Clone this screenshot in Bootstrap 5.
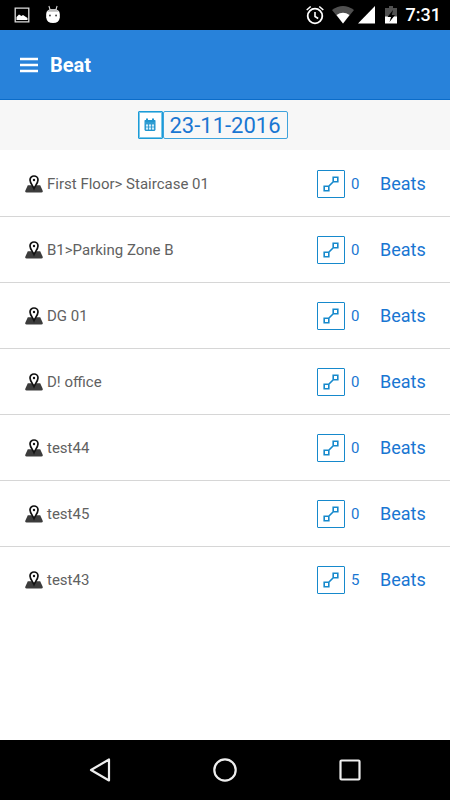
<!DOCTYPE html>
<html lang="en">
<head>
<meta charset="utf-8">
<meta name="viewport" content="width=device-width, initial-scale=1">
<title>Beat</title>
<link href="https://cdn.jsdelivr.net/npm/bootstrap@5.3.0/dist/css/bootstrap.min.css" rel="stylesheet">
<style>
  body { font-family: Roboto, "Liberation Sans", sans-serif; line-height: 24px; }
  svg { display: block; flex: none; }
  .status-bar { height: 30px; padding: 0 9px 0 14px; font-size: 18px; font-weight: 500; }
  .app-bar { height: 70px; background: #2882da; border-bottom: 1px solid #0b6cc9; padding: 0 20px; }
  .app-bar h1 { font-size: 20px; font-weight: 700; line-height: 24px; }
  .date-bar { height: 50px; background: #f7f7f7; padding-right: 25px; }
  .date-btn { width: 25px; height: 28px; border: 1px solid #1b9cd8; border-radius: 1px; outline: 1px solid #7cc6e8; outline-offset: -2px; background: #fff; }
  .date-input { width: 125px; height: 28px; border: 1px solid #3fa3dc; border-radius: 2px; background: #f7f7f7; color: #1976d2; font-size: 22px; text-align: center; }
  .beat-list { padding-top: 1px; }
  .beat-row { height: 66px; padding: 0 25px; border: 0; border-bottom: 1px solid #d6d6d6; color: #616161; font-size: 15px; }
  .beat-row:last-child { border-bottom-color: transparent; }
  .beat-btn { width: 28px; height: 28px; border: 1px solid #1689cc; border-radius: 1px; background: #fff; color: #1689cc; }
  .beat-count { width: 35px; padding-left: 6px; font-size: 15px; color: #1976d2; }
  .beat-link { width: 45px; font-size: 18px; color: #1976d2; white-space: nowrap; }
  .nav-keys { height: 60px; padding: 0 38px; }
  .nav-keys button { width: 124px; height: 60px; }
</style>
</head>
<body class="d-flex flex-column min-vh-100 bg-white">
<svg width="0" height="0" class="position-absolute" aria-hidden="true">
  <symbol id="pin" viewBox="0 0 18 18">
    <path d="M2.800 10.300h12.400l2.400 5.200q.5 2-1.200 2H1.600q-1.700 0-1.200-2z" fill="#3c3c3c"/>
    <path d="M9 13.500C8 11 5 8 5 5a4 4 0 0 1 8 0C13 8 10 11 9 13.500z" fill="#fff" stroke="#111" stroke-width="1.700"/>
    <circle cx="9" cy="5" r="1.200" fill="#111"/>
  </symbol>
  <symbol id="route" viewBox="0 0 16 16">
    <path d="M5.500 10.500l5-5M1.200 10.200h4.600v4.600H1.200zM10.200 1.200h4.600v4.600h-4.600z" fill="none" stroke="currentColor" stroke-width="1.600"/>
  </symbol>
</svg>

<div class="status-bar bg-black text-white d-flex align-items-center">
  <svg width="16" height="16" viewBox="0 0 16 16"><path d="M1.200 1.200h13.600v13.600h-13.600z" fill="none" stroke="#ddd" stroke-width="1.300"/><path d="M2.500 13v-3l2.500-2.500 2.500 1.500 1.500-1 4.500 3v2z" fill="#fff"/></svg>
  <svg class="ms-3" width="14" height="20" viewBox="0 0 16 20" preserveAspectRatio="none"><path d="M3.300 1l1.500 4M12.700 1l-1.500 4" stroke="#ddd" stroke-width="1.200"/><path d="M.2 9Q.5 4 8 4t7.800 5v3.500Q15 18 8 18T.2 12.500z" fill="#fff"/><path d="M1.500 6.800Q3 4 8 4t6.500 2.800z" fill="#bbb"/><circle cx="4.500" cy="10.500" r="1" fill="#333"/><circle cx="11.500" cy="10.500" r="1" fill="#333"/></svg>
  <svg class="ms-auto" width="18" height="20" viewBox="0 0 18 20"><circle cx="9" cy="11" r="7.300" fill="none" stroke="#fff" stroke-width="1.800"/><path d="M9 7v4.500l3.200 2M.7 5l4-3.500M17.300 5l-4-3.500" fill="none" stroke="#fff" stroke-width="1.600"/></svg>
  <svg class="ms-2" width="22" height="18" viewBox="0 0 22 18"><path d="M0 4Q11-4 22 4L11 17.500z" fill="#505050"/><path d="M4.500 9Q11 4.500 17.500 9L11 17.500z" fill="#fff"/></svg>
  <svg class="ms-1" width="17" height="18" viewBox="0 0 17 18"><path d="M17 0v17.500H0z" fill="#fff"/></svg>
  <svg width="31" height="18" viewBox="-10 0 31 18"><path d="M0 2h4V0h4v2h4v9H0z" fill="#505050"/><path d="M0 10.500h12v7H0z" fill="#fff"/><path d="M8 4L2.500 11H6l-1.500 5L10 9H6.800z" fill="#000"/></svg>
  <span>7:31</span>
</div>

<header class="app-bar d-flex align-items-center text-white">
  <button type="button" class="btn p-0 border-0 text-white" aria-label="Menu"><svg width="18" height="16" viewBox="0 0 18 16"><path d="M0 2h18M0 8h18M0 14h18" stroke="currentColor" stroke-width="2.400"/></svg></button>
  <h1 class="mb-0 ps-2 ms-1">Beat</h1>
</header>

<main class="flex-grow-1">
  <div class="date-bar d-flex align-items-center justify-content-center">
    <button type="button" class="date-btn d-flex align-items-center justify-content-center p-0" aria-label="Pick date"><svg width="12" height="14" viewBox="0 0 12 14"><path d="M1 2h1V.5h2V2h4V.5h2V2h1l.5.5v9.500l-1 1h-9l-1-1v-9.500z" fill="#2196cf"/><path d="M.8 5h10.400M2 6.500h2v2H2zM5 6.500h2v2H5zM8 6.500h2v2H8zM2 9.500h2v2H2zM5 9.500h2v2H5zM8 9.500h2v2H8z" fill="#d8eefa" stroke="#d8eefa" stroke-width=".2"/></svg></button>
    <input type="text" class="date-input p-0" value="23-11-2016" aria-label="Date">
  </div>
  <ul class="beat-list list-group list-group-flush">
    <li class="list-group-item beat-row d-flex align-items-center"><svg width="18" height="18"><use href="#pin"/></svg><span class="ps-1 me-auto">First Floor&gt; Staircase 01</span><button type="button" class="beat-btn d-flex align-items-center justify-content-center p-0" aria-label="Route"><svg width="16" height="16"><use href="#route"/></svg></button><span class="beat-count">0</span><a href="#" class="beat-link text-decoration-none">Beats</a></li>
    <li class="list-group-item beat-row d-flex align-items-center"><svg width="18" height="18"><use href="#pin"/></svg><span class="ps-1 me-auto">B1&gt;Parking Zone B</span><button type="button" class="beat-btn d-flex align-items-center justify-content-center p-0" aria-label="Route"><svg width="16" height="16"><use href="#route"/></svg></button><span class="beat-count">0</span><a href="#" class="beat-link text-decoration-none">Beats</a></li>
    <li class="list-group-item beat-row d-flex align-items-center"><svg width="18" height="18"><use href="#pin"/></svg><span class="ps-1 me-auto">DG 01</span><button type="button" class="beat-btn d-flex align-items-center justify-content-center p-0" aria-label="Route"><svg width="16" height="16"><use href="#route"/></svg></button><span class="beat-count">0</span><a href="#" class="beat-link text-decoration-none">Beats</a></li>
    <li class="list-group-item beat-row d-flex align-items-center"><svg width="18" height="18"><use href="#pin"/></svg><span class="ps-1 me-auto">D! office</span><button type="button" class="beat-btn d-flex align-items-center justify-content-center p-0" aria-label="Route"><svg width="16" height="16"><use href="#route"/></svg></button><span class="beat-count">0</span><a href="#" class="beat-link text-decoration-none">Beats</a></li>
    <li class="list-group-item beat-row d-flex align-items-center"><svg width="18" height="18"><use href="#pin"/></svg><span class="ps-1 me-auto">test44</span><button type="button" class="beat-btn d-flex align-items-center justify-content-center p-0" aria-label="Route"><svg width="16" height="16"><use href="#route"/></svg></button><span class="beat-count">0</span><a href="#" class="beat-link text-decoration-none">Beats</a></li>
    <li class="list-group-item beat-row d-flex align-items-center"><svg width="18" height="18"><use href="#pin"/></svg><span class="ps-1 me-auto">test45</span><button type="button" class="beat-btn d-flex align-items-center justify-content-center p-0" aria-label="Route"><svg width="16" height="16"><use href="#route"/></svg></button><span class="beat-count">0</span><a href="#" class="beat-link text-decoration-none">Beats</a></li>
    <li class="list-group-item beat-row d-flex align-items-center"><svg width="18" height="18"><use href="#pin"/></svg><span class="ps-1 me-auto">test43</span><button type="button" class="beat-btn d-flex align-items-center justify-content-center p-0" aria-label="Route"><svg width="16" height="16"><use href="#route"/></svg></button><span class="beat-count">5</span><a href="#" class="beat-link text-decoration-none">Beats</a></li>
  </ul>
</main>

<nav class="nav-keys bg-black d-flex align-items-center justify-content-between" aria-label="System">
  <button type="button" class="btn p-0 border-0 d-flex align-items-center justify-content-center" aria-label="Back"><svg width="24" height="26" viewBox="0 0 24 26"><path d="M21 2.500v21L3 13z" fill="none" stroke="#eee" stroke-width="2.200" stroke-linejoin="round"/></svg></button>
  <button type="button" class="btn p-0 border-0 d-flex align-items-center justify-content-center" aria-label="Home"><svg width="26" height="26" viewBox="0 0 26 26"><circle cx="13" cy="13" r="10.700" fill="none" stroke="#eee" stroke-width="2.200"/></svg></button>
  <button type="button" class="btn p-0 border-0 d-flex align-items-center justify-content-center" aria-label="Recent apps"><svg width="24" height="24" viewBox="0 0 24 24"><rect x="2.500" y="2.500" width="19" height="19" rx="1" fill="none" stroke="#eee" stroke-width="2.200"/></svg></button>
</nav>
<script src="https://cdn.jsdelivr.net/npm/bootstrap@5.3.0/dist/js/bootstrap.bundle.min.js"></script>
</body>
</html>
